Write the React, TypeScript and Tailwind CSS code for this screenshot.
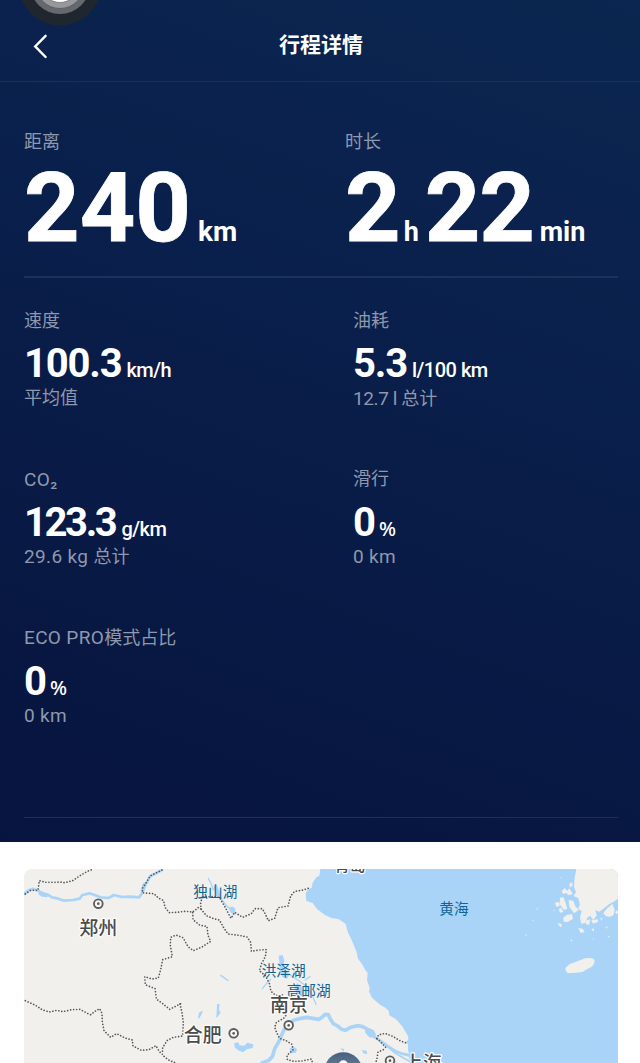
import React from 'react';

interface Metric {
  label: React.ReactNode;
  value: string;
  unit: string;
  note: React.ReactNode;
  labelClass?: string;
  valueClass: string;
  unitClass: string;
  noteClass: string;
}

const Latin: React.FC<{ children: React.ReactNode }> = ({ children }) => (
  <span className="text-[19px] tracking-[0.35px]">{children}</span>
);

const metrics: Metric[] = [
  {
    label: '速度',
    value: '100.3',
    unit: 'km/h',
    note: '平均值',
    labelClass: 'pt-px',
    valueClass: 'tracking-[-1.2px]',
    unitClass: 'ml-[5px] text-[20px] tracking-[-0.5px]',
    noteClass: '',
  },
  {
    label: '油耗',
    value: '5.3',
    unit: 'l/100 km',
    note: (
      <>
        <span className="text-[19px] tracking-[-0.4px]">12.7 l </span>总计
      </>
    ),
    labelClass: 'pt-px',
    valueClass: 'tracking-[-1.2px]',
    unitClass: 'ml-[5px] text-[20px] tracking-[-0.5px]',
    noteClass: 'pt-px',
  },
  {
    label: <Latin>CO₂</Latin>,
    value: '123.3',
    unit: 'g/km',
    note: (
      <>
        <Latin>29.6 kg </Latin>总计
      </>
    ),
    labelClass: 'pt-px',
    valueClass: 'tracking-[-2.4px]',
    unitClass: 'ml-[6px] text-[20px] tracking-[-0.5px]',
    noteClass: '',
  },
  {
    label: '滑行',
    value: '0',
    unit: '%',
    note: <Latin>0 km</Latin>,
    valueClass: '',
    unitClass: "ml-[3px] text-[20px] font-['Noto_Sans']",
    noteClass: '',
  },
  {
    label: (
      <>
        <Latin>ECO PRO</Latin>模式占比
      </>
    ),
    value: '0',
    unit: '%',
    note: <Latin>0 km</Latin>,
    valueClass: '',
    unitClass: "ml-[3px] text-[20px] font-['Noto_Sans']",
    noteClass: '',
  },
];

const Header: React.FC = () => (
  <header className="relative flex h-[82px] items-center justify-center overflow-hidden border-b border-[#1a3059] pt-[9px]">
    {/* Assistive touch button */}
    <svg className="absolute left-[18px] top-0" width="84" height="26" viewBox="18 0 84 26">
      <circle cx="60" cy="-16" r="41.5" fill="#20262e" />
      <circle cx="60" cy="-16" r="30" fill="#65686f" />
      <circle cx="60" cy="-16" r="24.5" fill="#97989b" stroke="#54575e" strokeWidth="0.8" />
      <circle cx="60" cy="-16" r="18.5" fill="#fff" stroke="#77797c" strokeWidth="0.8" />
    </svg>
    <button className="absolute left-[32px] top-[33px]">
      <svg width="17" height="27" viewBox="0 0 17 27" fill="none" stroke="#fff" strokeWidth="2.4" strokeLinecap="round">
        <path d="M13.6 2.8 3.2 13.4 13.6 24" />
      </svg>
    </button>
    <h1 className="ml-[2px] text-[21px] leading-[30px] font-bold text-white">行程详情</h1>
  </header>
);

const MetricCell: React.FC<{ metric: Metric }> = ({ metric }) => (
  <div className="h-[159px]">
    <div className={`h-6 text-lg leading-6 text-[#8f98ad] ${metric.labelClass ?? ''}`}>{metric.label}</div>
    <div className="mt-3 flex h-10 items-baseline leading-10 whitespace-nowrap text-white">
      <span className={`text-[40px] font-bold ${metric.valueClass}`}>{metric.value}</span>
      <span className={`font-medium ${metric.unitClass}`}>{metric.unit}</span>
    </div>
    <div className={`mt-[2px] h-6 text-lg leading-6 whitespace-nowrap text-[#8f98ad] ${metric.noteClass}`}>
      {metric.note}
    </div>
  </div>
);

const CityDot: React.FC<{ x: number; y: number }> = ({ x, y }) => (
  <g>
    <circle cx={x} cy={y} r="13" fill="#f7f7f5" stroke="#5c5c5c" strokeWidth="5.5" />
    <circle cx={x} cy={y} r="4" fill="#5c5c5c" />
  </g>
);

const TripMap: React.FC = () => (
  <svg
    className="block w-full rounded-t-[8px]"
    height="194"
    viewBox="72 87 1782 582"
    fontFamily='"Noto Sans CJK SC", sans-serif'
  >
    <rect x="72" y="87" width="1782" height="582" fill="#f1f0ed" />

    {/* Sea */}
    <path
      fill="#a9d4f8"
      d="M961 87 958 107 949 112 938 128 935 143 923 149 917 160 919 183 938 189 951 207 974 224 994 234 1017 238 1037 252 1043 275 1056 302 1069 334 1074 356 1086 372 1096 391 1103 398 1101 421 1109 443 1107 455 1116 473 1140 494 1154 502 1166 512 1168 526 1188 538 1206 558 1224 588 1225 600 1212 608 1196 600 1175 591 1160 583 1145 581 1133 588 1150 599 1170 607 1194 616 1222 625 1226 636 1230 669H1854V87Z"
    />
    {/* Chongming island */}
    <path d="M1134 588 1142 581 1158 580 1180 590 1212 604 1224 612 1224 630 1212 636 1188 628 1166 616 1146 604Z" fill="#f1f0ed" />

    {/* Rivers */}
    <g fill="none" stroke="#a9d4f8" strokeLinecap="round" strokeLinejoin="round">
      <path strokeWidth="8" d="M72 162 86 151 98 146 116 152 127 166 143 164 156 172 175 176 192 182 219 180 239 176 247 165 269 160 286 166 302 172 325 174 342 165 365 171 390 170 417 172 426 160 430 140 441 127 450 109 464 102 486 90" />
      <path strokeWidth="13" d="M122 160 138 165M428 150 434 134" />
      <path strokeWidth="11" d="M786 669 806 661 817 650 824 626 836 606 844 587 852 569 866 550 883 540 903 535 920 532 938 535 957 538 966 532 975 523 985 524 991 537 1000 551 1013 558 1025 568 1036 571 1052 562 1072 557 1088 560 1103 568 1117 574 1122 584" />
      <path strokeWidth="17" d="M1104 575 1112 584" />
      <path strokeWidth="8" d="M1118 588 1140 601 1160 616 1184 632 1206 641 1228 646" />
      <path strokeWidth="5" d="M1165 622 1186 640 1212 655 1228 664" />
      <path strokeWidth="4" d="M855 395 875 408 895 421 918 438 934 460 948 493M915 420 930 410M787 446 800 430 812 418M662 406 684 421" />
      <path strokeWidth="4" d="M656 493 653 508 660 517 651 529M597 533 606 515M625 115 634 132 640 150M660 170 678 196 698 212" />
    </g>
    <g fill="#a9d4f8">
      <path d="M836 347 848 345 853 362 849 380 860 394 870 402 861 416 846 410 840 390 838 366Z" />
      <path d="M883 440 892 430 904 438 910 460 903 475 892 468Z" />
      <path d="M702 610 714 607 719 616 733 617 742 608 760 613 758 624 741 628 729 637 717 632 705 623Z" />
      <path d="M686 205 696 199 706 206 706 222 693 219Z" />
      <path d="M641 140 650 132 657 152 662 170 648 168Z" />
      <path d="M869 625 882 621 891 627 888 638 872 640Z" />
      <path d="M987 669 985 655 995 650 1012 653 1020 669Z" />
      <path d="M1086 630 1100 632 1102 643 1090 640ZM1021 625 1033 627 1030 635ZM597 518 605 513 604 524 594 535Z" />
      <path d="M651 492 658 494 657 520 649 535Z" />
    </g>

    {/* Korean coast and Jeju */}
    <g fill="#f1f0ed">
      <path d="M1729 87 1724 112 1722 140 1728 157 1720 168 1735 174 1740 195 1734 206 1745 213 1740 232 1744 251 1756 249 1762 233 1771 227 1779 240 1790 227 1786 210 1797 215 1812 205 1828 192 1841 185 1854 176V87Z" />
      <path d="M1819 207 1831 197 1837 191 1844 210 1840 226 1828 231 1817 228 1810 220ZM1690 233 1700 225 1716 222 1719 236 1703 246 1691 245Z" />
      <path d="M1685 153 1695 144 1701 153 1708 145 1718 162 1707 166 1698 159 1689 162ZM1680 173 1690 171 1697 189 1702 206 1692 210 1679 193ZM1706 180 1720 182 1726 199 1736 210 1722 220 1708 200ZM1665 188 1677 186 1679 198 1669 200ZM1676 208 1684 203 1690 216 1680 218Z" />
      <path d="M1758 242 1770 238 1768 254 1758 253ZM1774 241 1793 238 1794 246 1779 251ZM1801 234 1807 235 1804 244ZM1735 264 1748 266 1754 276 1742 279ZM1774 268 1782 265 1781 276ZM1846 216 1854 210V218L1848 223ZM1817 262 1823 259 1821 266ZM1824 289 1829 287 1827 294ZM1712 298 1717 301 1713 305ZM1575 283 1581 284 1578 289ZM1606 203 1610 207 1616 201 1611 210ZM1596 240 1601 239 1600 243ZM1659 210 1664 210 1662 214ZM1708 131 1716 127 1718 136 1710 143ZM1680 111 1684 112 1683 115ZM1778 295 1781 295 1782 300ZM1672 250 1682 251 1686 256 1682 262Z" />
      <path d="M1697 383 1709 372 1726 366 1742 360 1755 355 1772 354 1781 357 1784 363 1780 376 1773 382 1758 389 1748 396 1729 398 1713 399 1703 400 1696 390Z" />
    </g>

    {/* Province borders */}
    <g fill="none" stroke="#555" strokeWidth="5" strokeLinecap="round" strokeLinejoin="round" strokeDasharray="0.1 9">
      <path d="M76 162 92 151 114 151 118 122 136 127 166 127 180 126 194 128 218 122 240 107 262 94 276 89" />
      <path d="M486 90 466 100 450 108 440 126 428 144 427 158 446 160 462 161 475 174 491 182 495 202 508 218 530 217 556 214 578 216 595 203 603 207" />
      <path d="M609 171 640 170 658 172 673 197 693 235 704 217 728 232 754 221 765 206 787 206 796 222 805 242 824 235 834 203 864 198 872 168 884 154 910 150 927 144" />
      <path d="M606 172 602 190 603 207 619 227 641 236 658 240 671 263 684 282 717 286 741 291 752 307 754 334 778 330 799 329 796 350 785 370 778 392 797 408 808 430 813 454 826 465 841 469 854 460" />
      <path d="M578 218 579 239 600 256 621 259 624 286 632 304 606 321 580 332 564 320 549 293 528 285 512 292 511 317 517 350 488 359 482 389 475 414 456 417 434 410 436 434 465 446 469 477 487 490 509 508 544 490" />
      <path d="M540 492 546 518 550 548 548 588 520 592 501 602 488 623 487 645 506 660 527 669" />
      <path d="M76 482 105 495 126 509 148 516 170 511 189 515 215 509 240 508 262 520 272 524 285 514 299 506 306 520 307 546 312 572 332 592 350 581 375 594 397 600 399 618 424 631 447 629 468 617 478 635 487 642" />
      <path d="M857 527 850 536 829 547 824 562 831 580 839 595 858 602 876 613 879 630 861 646 862 659 882 664 906 663 934 657 938 669" />
      <path d="M1131 596 1135 585 1155 580 1178 589 1200 602 1218 609" />
      <path d="M1131 596 1140 604 1158 623M1150 629 1134 636 1131 655 1127 669" />
    </g>

    <CityDot x={295} y={191} />
    <CityDot x={701} y={580} />
    <CityDot x={866} y={556} />
    <CityDot x={1170} y={662} />

    {/* Water labels */}
    <g fill="#0d6593" fontSize="44">
      <text x="580" y="171">独山湖</text>
      <text x="1318" y="223">黄海</text>
      <text x="785" y="408">洪泽湖</text>
      <text x="860" y="468">高邮湖</text>
    </g>

    {/* City labels */}
    <g fill="#4b4b4b" fontSize="57" fontWeight="500" stroke="#fff" strokeWidth="7" strokeLinejoin="round" paintOrder="stroke">
      <text x="238" y="284">郑州</text>
      <text x="551" y="605">合肥</text>
      <text x="810" y="516">南京</text>
      <text x="1211" y="691">上海</text>
      <text x="1003" y="94" fontSize="47">青岛</text>
    </g>

    {/* Destination pin */}
    <defs>
      <linearGradient id="pin" x1="0" y1="0" x2="0" y2="1">
        <stop offset="0" stopColor="#46607f" />
        <stop offset="1" stopColor="#8fa5c0" />
      </linearGradient>
    </defs>
    <circle cx="1030" cy="695" r="58" fill="url(#pin)" />
    <circle cx="1030" cy="675" r="14" fill="#fff" />
  </svg>
);

const App: React.FC = () => {
  return (
    <div className="h-[1063px] w-[640px] overflow-hidden bg-white font-[Roboto,'Noto_Sans_CJK_SC',sans-serif]">
      <div className="h-[842px] bg-[linear-gradient(200deg,#0a2750_0%,#0a204c_35%,#081a45_65%,#07143f_100%)]">
        <Header />
        <main className="pr-[22px] pl-6">
          {/* Totals */}
          <section className="flex h-[196px] border-b-2 border-[#1c315b] pt-12">
            <div className="w-[321px]">
              <div className="h-6 text-lg leading-6 text-[#8f98ad]">距离</div>
              <div className="mt-[14px] flex h-20 items-baseline leading-[80px] text-white">
                <span className="text-[97px] font-bold [-webkit-text-stroke:0.8px_white]">240</span>
                <span className="ml-[7px] text-[28px] font-bold">km</span>
              </div>
            </div>
            <div>
              <div className="h-6 text-lg leading-6 text-[#8f98ad]">时长</div>
              <div className="mt-[14px] flex h-20 items-baseline leading-[80px] whitespace-nowrap text-white">
                <span className="text-[97px] font-bold [-webkit-text-stroke:0.8px_white]">2</span>
                <span className="ml-[3px] text-[27px] font-bold">h</span>
                <span className="ml-[6px] text-[97px] font-bold tracking-[-1.2px] [-webkit-text-stroke:0.8px_white]">22</span>
                <span className="ml-[6px] text-[27px] font-bold">min</span>
              </div>
            </div>
          </section>

          {/* Averages */}
          <section className="grid h-[540px] grid-cols-[329px_1fr] content-start border-b border-[#1c2e59] pt-[30px]">
            {metrics.map((metric, index) => (
              <MetricCell key={index} metric={metric} />
            ))}
          </section>
        </main>
      </div>

      <div className="pt-[27px] pr-[22px] pl-6">
        <TripMap />
      </div>
    </div>
  );
};

export default App;
